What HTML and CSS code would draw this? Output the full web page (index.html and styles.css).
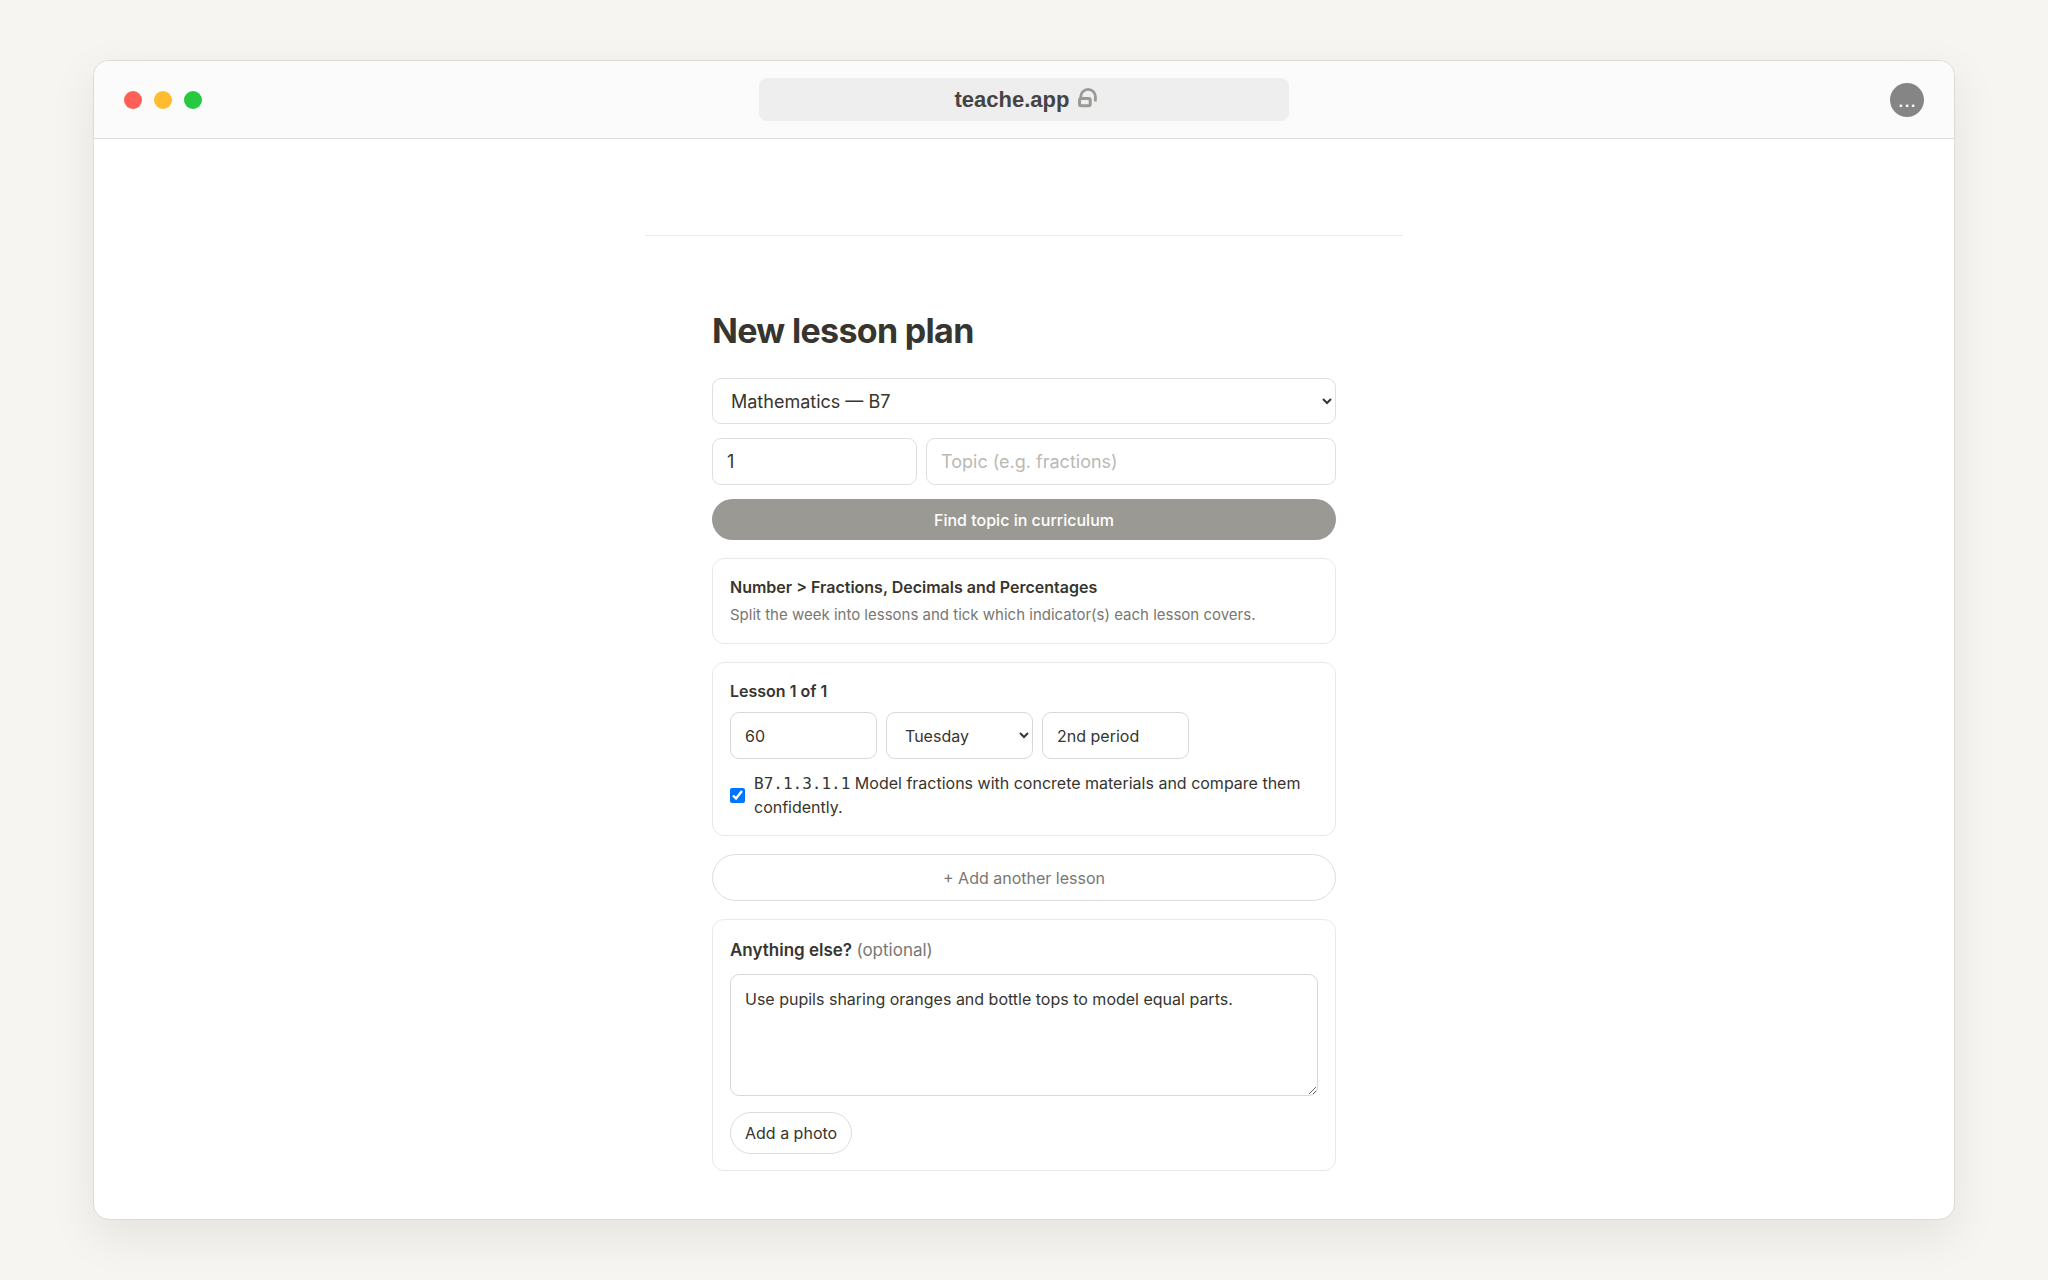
FILE: index.html
```html
<!DOCTYPE html>
<html lang="en">
<head>
    <meta charset="UTF-8">
    <meta name="viewport" content="width=device-width, initial-scale=1.0">
    <title>teache.app - New lesson plan</title>
    <link rel="stylesheet" href="styles.css">
</head>
<body>
    <div class="window">
        <header class="titlebar">
            <div class="lights">
                <span class="light red"></span>
                <span class="light yellow"></span>
                <span class="light green"></span>
            </div>
            <div class="address">
                <span>teache.app</span>
                <svg class="lock" viewBox="0 0 19 20" fill="none" stroke="#9b9993" aria-hidden="true">
                    <rect x="1.5" y="10.5" width="10.7" height="7.3" rx="1.5" stroke-width="3"/>
                    <path d="M2.8 11V8.6a7.3 7.2 0 0 1 14.6 0v4.9" stroke-width="2.8"/>
                </svg>
            </div>
            <button class="menu-btn" type="button" aria-label="Menu">...</button>
        </header>

        <main class="page">
            <form class="lesson-form">
                <h1>New lesson plan</h1>

                <select class="field subject" aria-label="Class">
                    <option>Mathematics — B7</option>
                </select>

                <div class="topic-row">
                    <input class="field" type="text" value="1" aria-label="Week">
                    <input class="field" type="text" placeholder="Topic (e.g. fractions)" aria-label="Topic">
                </div>

                <button class="btn primary" type="button">Find topic in curriculum</button>

                <section class="card">
                    <h2>Number &gt; Fractions, Decimals and Percentages</h2>
                    <p class="hint">Split the week into lessons and tick which indicator(s) each lesson covers.</p>
                </section>

                <section class="card">
                    <h2>Lesson 1 of 1</h2>
                    <div class="lesson-row">
                        <input class="field small" type="text" value="60" aria-label="Minutes">
                        <select class="field small" aria-label="Day">
                            <option>Monday</option>
                            <option selected>Tuesday</option>
                            <option>Wednesday</option>
                            <option>Thursday</option>
                            <option>Friday</option>
                        </select>
                        <input class="field small" type="text" value="2nd period" aria-label="Period">
                    </div>
                    <label class="indicator">
                        <input type="checkbox" checked>
                        <span><code>B7.1.3.1.1</code> Model fractions with concrete materials and compare them confidently.</span>
                    </label>
                </section>

                <button class="btn outline" type="button">+ Add another lesson</button>

                <section class="card">
                    <label class="notes-label" for="notes">Anything else? <span>(optional)</span></label>
                    <textarea class="field small notes" id="notes">Use pupils sharing oranges and bottle tops to model equal parts.</textarea>
                    <button class="btn photo" type="button">Add a photo</button>
                </section>
            </form>
        </main>
    </div>
</body>
</html>
```
FILE: styles.css
```css
* {
    box-sizing: border-box;
}

body {
    margin: 0;
    padding: 60px 93px;
    background-color: #f6f5f1;
    color: #37352f;
    font-family: Inter, sans-serif;
    font-size: 16px;
    line-height: 24px;
}

h1,
h2,
p {
    margin: 0;
}

.window {
    min-height: calc(100vh - 120px);
    background-color: #fff;
    border: 1px solid #dcdbd7;
    border-radius: 16px;
    box-shadow: 0 16px 48px rgba(0, 0, 0, 0.08);
    overflow: hidden;
}

/* Title bar */
.titlebar {
    display: grid;
    grid-template-columns: 1fr 530px 1fr;
    align-items: center;
    height: 78px;
    padding: 0 30px;
    background-color: #fbfbfb;
    border-bottom: 1px solid #dedede;
}

.lights {
    display: flex;
    gap: 12px;
}

.light {
    width: 18px;
    height: 18px;
    border-radius: 50%;
}

.red {
    background-color: #ff5f57;
}

.yellow {
    background-color: #febc2e;
}

.green {
    background-color: #28c840;
}

.address {
    display: flex;
    justify-content: center;
    align-items: center;
    gap: 9px;
    height: 43px;
    padding-left: 4px;
    border-radius: 8px;
    background-color: #eee;
    color: #444;
    font-family: "Liberation Sans", Arial, sans-serif;
    font-size: 22px;
    font-weight: bold;
}

.lock {
    width: 19px;
    height: 20px;
    margin-bottom: 4px;
}

.menu-btn {
    justify-self: end;
    width: 34px;
    height: 34px;
    padding: 0;
    border: none;
    border-radius: 50%;
    background-color: #858585;
    color: #fff;
    font-family: "Liberation Sans", Arial, sans-serif;
    font-size: 22px;
    cursor: pointer;
}

/* Page */
.page {
    max-width: 758px;
    margin: 96px auto 0;
    padding: 72px 67px 48px;
    border-top: 1px solid #ececec;
}

.lesson-form {
    display: flex;
    flex-direction: column;
}

h1 {
    margin-bottom: 24px;
    font-size: 34px;
    font-weight: 700;
    line-height: 46px;
    letter-spacing: -0.02em;
}

h2 {
    font-size: 16px;
    font-weight: 600;
}

.field {
    width: 100%;
    min-width: 0;
    height: 47px;
    padding: 0 14px;
    border: 1px solid #dfdfde;
    border-radius: 9px;
    background-color: #fff;
    color: #37352f;
    font-family: inherit;
    font-size: 18px;
}

.field::placeholder {
    color: #bab9b6;
}

.subject {
    height: 46px;
}

.topic-row {
    display: grid;
    grid-template-columns: 1fr 2fr;
    gap: 9px;
    margin: 14px 0;
}

.btn {
    border: 1px solid #dcdcda;
    border-radius: 24px;
    background-color: #fff;
    color: #37352f;
    font-family: inherit;
    font-size: 16px;
    cursor: pointer;
}

.primary {
    height: 41px;
    border: none;
    background-color: #9b9993;
    color: #fff;
    font-weight: 500;
}

.outline {
    height: 47px;
    margin-top: 18px;
    color: #787774;
}

.card {
    margin-top: 18px;
    padding: 16px 17px;
    border: 1px solid #e9e9e8;
    border-radius: 12px;
}

.hint {
    margin-top: 4px;
    color: #787774;
    font-size: 15px;
}

/* Lesson card */
.lesson-row {
    display: flex;
    gap: 9px;
    margin: 9px 0 12px;
}

.small {
    width: 147px;
    height: 47px;
    border-color: #d9d9d8;
    font-size: 16px;
}

.indicator {
    display: flex;
    align-items: center;
    gap: 9px;
}

.indicator input {
    flex-shrink: 0;
    width: 15px;
    height: 15px;
    margin: 0;
}

code {
    font-family: "DejaVu Sans Mono", monospace;
    line-height: 1;
}

/* Notes card */
.notes-label {
    display: block;
    font-size: 17px;
    font-weight: 600;
    line-height: 28px;
}

.notes-label span {
    color: #787774;
    font-weight: 400;
}

.notes {
    display: block;
    width: 100%;
    height: 122px;
    margin: 10px 0 16px;
    padding: 12px 14px;
    line-height: 24px;
    resize: vertical;
}

.photo {
    height: 42px;
    padding: 0 14px;
}
```
